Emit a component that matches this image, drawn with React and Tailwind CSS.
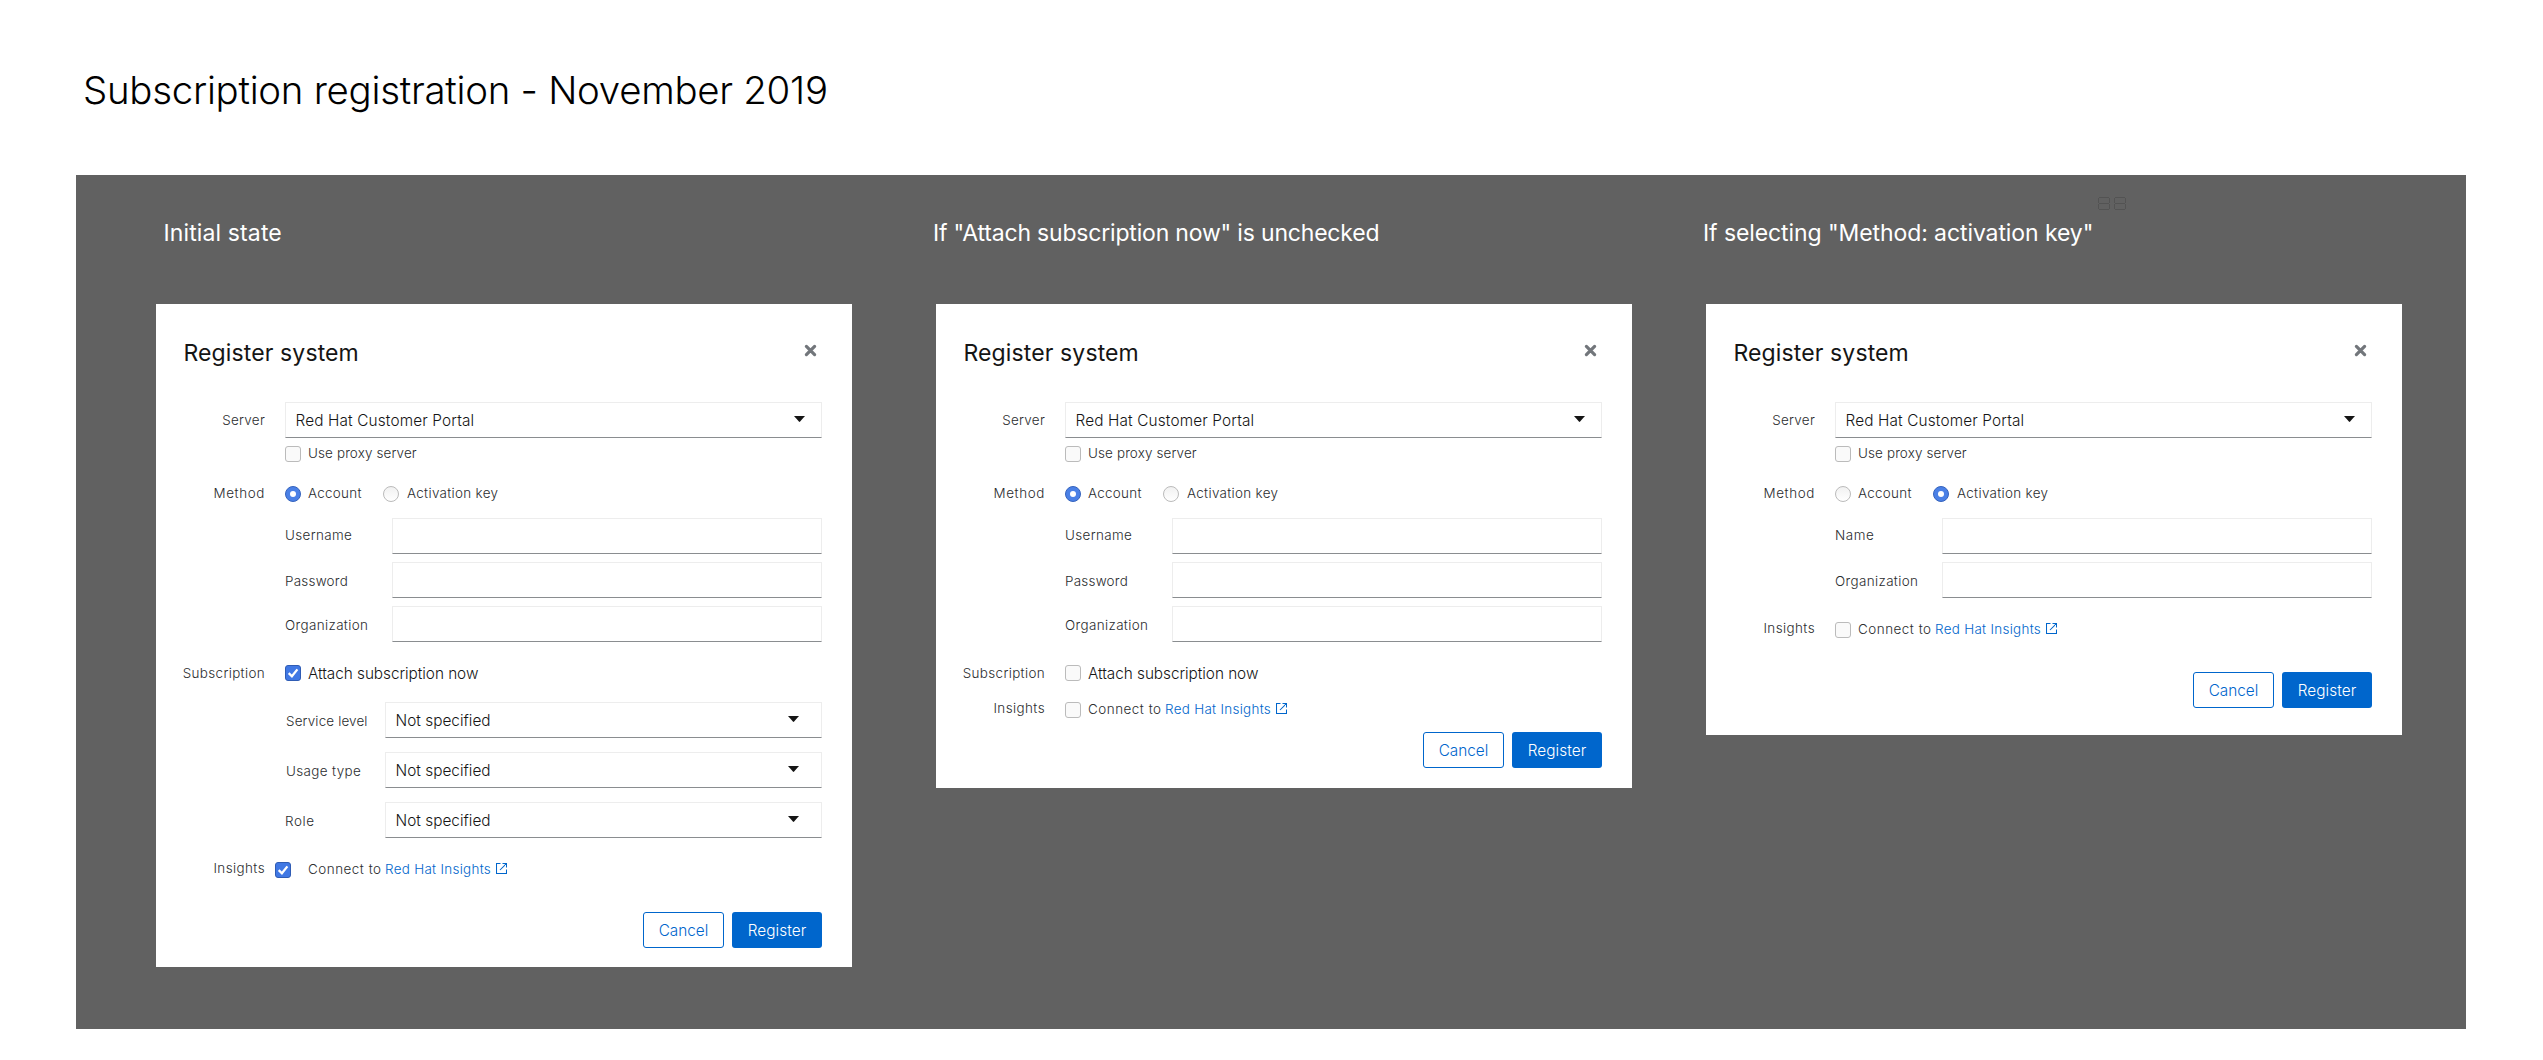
function Label({ children, className = "" }) {
  return (
    <div className={`w-[109px] shrink-0 text-right text-[13.45px] text-[#2b2d2f] whitespace-nowrap ${className}`}>
      {children}
    </div>
  );
}

function Caret() {
  return (
    <svg width="11" height="6" viewBox="0 0 11 6" className="block shrink-0" aria-hidden="true">
      <path d="M0 0h11L6.1 5.6Q5.5 6.2 4.9 5.6Z" fill="#151515" />
    </svg>
  );
}

function Select({ value, className = "", caret }) {
  return (
    <div
      className={`flex h-9 grow justify-between border border-[#ededed] border-b-[#8a8d90] bg-white pl-[10px] text-[15.35px] leading-9 text-[#151515] ${className}`}
    >
      <span className="-ml-[0.5px]">{value}</span>
      <span className={`mt-[13px] ${caret}`}>
        <Caret />
      </span>
    </div>
  );
}

function Checkbox({ checked }) {
  if (checked) {
    return (
      <span className="flex size-4 shrink-0 items-center justify-center rounded-[3px] border border-[#2f5cb4] bg-[#4078e4]">
        <svg width="12" height="12" viewBox="0 0 12 12" fill="none" aria-hidden="true">
          <path d="M1.7 6.2 4.9 9.3 10.4 2.4" stroke="#fff" strokeWidth="2.3" />
        </svg>
      </span>
    );
  }
  return <span className="size-4 shrink-0 rounded-[3px] border border-[#bbbbbb] bg-[#fafafa]" />;
}

function Radio({ checked }) {
  if (checked) {
    return (
      <span className="flex size-4 shrink-0 items-center justify-center rounded-full border border-[#3563bd] bg-[#4a80e6]">
        <span className="size-[6px] rounded-full bg-white" />
      </span>
    );
  }
  return (
    <span className="size-4 shrink-0 rounded-full border border-[#bbbbbb] bg-linear-to-b from-[#f1f1f1] to-white" />
  );
}

function Field({ label, labelClass }) {
  return (
    <div className="flex h-9">
      <span className={`w-[107px] shrink-0 text-[13.45px] leading-9 text-[#2b2d2f] ${labelClass}`}>{label}</span>
      <div className="h-9 grow border border-[#ededed] border-b-[#8a8d90] bg-white" />
    </div>
  );
}

function LevelSelect({ label, labelClass }) {
  return (
    <div className="flex h-9">
      <span className={`w-[100px] shrink-0 text-[13.45px] leading-[38px] text-[#2b2d2f] ${labelClass}`}>{label}</span>
      <Select value="Not specified" className="tracking-[0.02px]" caret="mr-[22px]" />
    </div>
  );
}

function ExternalLink() {
  return (
    <svg width="11" height="11" viewBox="0 0 11 11" fill="none" stroke="#0066cc" className="mt-[1px] ml-[5px] block" aria-hidden="true">
      <path d="M4.5 0.5H0.5V10.5H10.5V6.5M6.5 0.5H10.5V4.5M10.2 0.8 4 7" strokeWidth="1.05" />
    </svg>
  );
}

function Insights({ checked, className = "", shifted = false }) {
  return (
    <div className={`flex h-4 ${className}`}>
      <Label className="leading-[12px] tracking-[0.41px]">Insights</Label>
      <div className={shifted ? "mr-[10px] ml-[10px]" : "ml-5"}>
        <span className="flex">
          <Checkbox checked={checked} />
        </span>
      </div>
      <div className="ml-[7px] flex text-[13.45px] leading-[14px] whitespace-nowrap">
        <span className="w-[77px] tracking-[0.5px] text-[#2b2d2f]">Connect to</span>
        <span className="tracking-[0.29px] text-[#0066cc]">Red Hat Insights</span>
        <ExternalLink />
      </div>
    </div>
  );
}

function Actions({ className = "" }) {
  return (
    <div className={`flex justify-end gap-2 pr-[30px] text-[15.35px] leading-[34px] ${className}`}>
      <button className="flex h-9 w-[81px] justify-center rounded-[3px] border border-[#0066cc] bg-white pt-px text-[#0066cc]">
        Cancel
      </button>
      <button className="flex h-9 w-[90px] justify-center rounded-[3px] bg-[#0066cc] pt-[2px] tracking-[0.09px] text-white">
        Register
      </button>
    </div>
  );
}

function Dialog({ method, children, className = "" }) {
  return (
    <section className={`flex w-[696px] flex-col bg-white pt-[33px] ${className}`}>
      <header className="flex h-8 justify-between pr-[35px] pl-[27.5px]">
        <h3 className="text-[23px] leading-8 font-normal tracking-[0.12px] text-[#151515]">Register system</h3>
        <svg width="13" height="13" viewBox="0 0 13 13" className="mt-[7px] block" aria-hidden="true">
          <path d="M2.4 2.4 10.6 10.6M10.6 2.4 2.4 10.6" stroke="#72767b" strokeWidth="3.2" strokeLinecap="round" />
        </svg>
      </header>

      <div className="mt-[33px] flex h-9 pr-[30px]">
        <Label className="leading-[37px] tracking-[0.28px]">Server</Label>
        <Select value="Red Hat Customer Portal" className="ml-5 tracking-[0.14px]" caret="mr-[16px]" />
      </div>
      <div className="mt-2 ml-[129px] flex h-4 gap-[7px] text-[13.45px] leading-[14px] tracking-[0.13px] text-[#2b2d2f]">
        <Checkbox />
        <span>Use proxy server</span>
      </div>

      <div className="mt-6 flex h-4 text-[13.45px] leading-[14px] text-[#2b2d2f]">
        <Label className="tracking-[0.6px]">Method</Label>
        <div className="ml-5 flex w-[98px] gap-[7px] tracking-[0.28px]">
          <Radio checked={method === "account"} />
          <span>Account</span>
        </div>
        <div className="flex gap-2 tracking-[0.31px]">
          <Radio checked={method === "key"} />
          <span>Activation key</span>
        </div>
      </div>
      {children}
    </section>
  );
}

function AccountFields() {
  return (
    <div className="mt-4 mr-[30px] ml-[129px] flex flex-col gap-2">
      <Field label="Username" labelClass="tracking-[0.35px] -mt-px" />
      <Field label="Password" labelClass="tracking-[0.24px] mt-px" />
      <Field label="Organization" labelClass="tracking-[0.36px] mt-px" />
    </div>
  );
}

function SubscriptionToggle({ checked }) {
  return (
    <div className="mt-[23px] flex h-4 leading-4">
      <Label className="tracking-[0.34px]">Subscription</Label>
      <span className="ml-5 flex">
        <Checkbox checked={checked} />
      </span>
      <span className="mt-px ml-[7px] text-[15.35px] tracking-[-0.05px] text-[#151515]">Attach subscription now</span>
    </div>
  );
}

function Digits() {
  return (
    <svg width="30" height="14" viewBox="0 0 30 14" fill="none" stroke="#535353" className="absolute top-[22px] left-[391px]" aria-hidden="true">
      <path d="M2 .5H12M2 6.5H12M2 12.5H12M1.5 1V6M12.5 1V6M1.5 7V12M12.5 7V12M18 .5H28M18 6.5H28M18 12.5H28M17.5 1V6M28.5 1V6M17.5 7V12M28.5 7V12" />
    </svg>
  );
}

function Column({ title, titleClass, className = "", children }) {
  return (
    <div className={`relative flex w-[696px] flex-col items-start ${className}`}>
      <h2 className={`mt-[42px] mb-[55px] h-8 text-[23px] leading-8 font-normal whitespace-nowrap text-white ${titleClass}`}>
        {title}
      </h2>
      {children}
    </div>
  );
}

export default function App() {
  return (
    <main className="flex h-[1060px] w-[2543px] flex-col items-start bg-white font-['Inter','Liberation_Sans',sans-serif] font-[340]">
      <h1 className="mt-[62px] ml-[83px] h-[56px] text-[38.4px] leading-[56px] tracking-[-0.26px] whitespace-nowrap text-black">
        Subscription registration - November 2019
      </h1>
      <div className="mt-[57px] ml-[76px] flex h-[854px] w-[2390px] items-start bg-[#616161] pl-20">
        <Column title="Initial state" titleClass="ml-[7.5px] tracking-[0.12px]">
          <Dialog method="account" className="pb-[19px]">
            <AccountFields />
            <SubscriptionToggle checked />
            <div className="mt-[21px] mr-[30px] ml-[129px] flex flex-col gap-[14px]">
              <LevelSelect label="Service level" labelClass="tracking-[0.14px] pl-px" />
              <LevelSelect label="Usage type" labelClass="tracking-[0.36px] pl-px" />
              <LevelSelect label="Role" labelClass="tracking-[0.6px]" />
            </div>
            <Insights checked shifted className="mt-6" />
            <Actions className="mt-[34px]" />
          </Dialog>
        </Column>
        <Column title={'If "Attach subscription now" is unchecked'} titleClass="-ml-[3px] tracking-[-0.19px]" className="ml-[84px]">
          <Dialog method="account" className="pb-5">
            <AccountFields />
            <SubscriptionToggle />
            <Insights className="mt-[21px]" />
            <Actions className="mt-[14px]" />
          </Dialog>
        </Column>
        <Column title={'If selecting "Method: activation key"'} titleClass="-ml-[3px] tracking-[-0.09px]" className="ml-[74px]">
          <Digits />
          <Dialog method="key" className="pb-[27px]">
            <div className="mt-4 mr-[30px] ml-[129px] flex flex-col gap-2">
              <Field label="Name" labelClass="tracking-[0.6px] -mt-px" />
              <Field label="Organization" labelClass="tracking-[0.36px] mt-px" />
            </div>
            <Insights className="mt-6" />
            <Actions className="mt-[34px]" />
          </Dialog>
        </Column>
      </div>
    </main>
  );
}
